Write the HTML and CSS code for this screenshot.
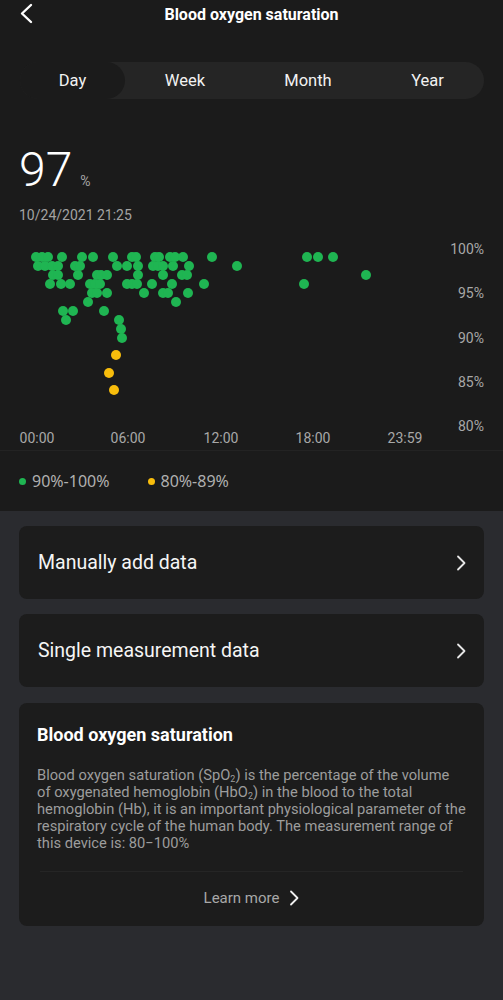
FILE: index.html
```html
<!DOCTYPE html>
<html>
<head>
<meta charset="utf-8">
<link rel="stylesheet" href="styles.css">
</head>
<body>
<div class="top">
  <header class="header">
    <svg class="back" width="14" height="22" viewBox="0 0 14 22"><path d="M11 2 L2 10.5 L11 19" fill="none" stroke="#fff" stroke-width="2.4" stroke-linecap="round" stroke-linejoin="round"/></svg>
    <h1 class="title">Blood oxygen saturation</h1>
  </header>

  <nav class="tabs">
    <span class="tab active">Day</span>
    <span class="tab">Week</span>
    <span class="tab">Month</span>
    <span class="tab">Year</span>
  </nav>

  <section class="reading">
    <div class="value"><span class="num">97</span><span class="unit">%</span></div>
    <div class="date">10/24/2021 21:25</div>
  </section>

  <div class="chart">
    <svg width="503" height="210" viewBox="0 0 503 210">
      <g class="ylab">
        <text x="484" y="8">100%</text>
        <text x="484" y="52">95%</text>
        <text x="484" y="97">90%</text>
        <text x="484" y="141">85%</text>
        <text x="484" y="185">80%</text>
      </g>
      <g class="xlab">
        <text x="37" y="197">00:00</text>
        <text x="128" y="197">06:00</text>
        <text x="221" y="197">12:00</text>
        <text x="313" y="197">18:00</text>
        <text x="405" y="197">23:59</text>
      </g>
      <g class="g-dots">
        <circle cx="36" cy="16" r="5"/><circle cx="42" cy="16" r="5"/><circle cx="48" cy="16" r="5"/>
        <circle cx="62" cy="16" r="5"/><circle cx="82" cy="16" r="5"/><circle cx="93" cy="16" r="5"/>
        <circle cx="113" cy="16" r="5"/><circle cx="132" cy="16" r="5"/><circle cx="136" cy="16" r="5"/>
        <circle cx="155" cy="16" r="5"/><circle cx="159" cy="16" r="5"/><circle cx="170" cy="16" r="5"/>
        <circle cx="175" cy="16" r="5"/><circle cx="183" cy="16" r="5"/><circle cx="212" cy="16" r="5"/>
        <circle cx="307" cy="16" r="5"/><circle cx="318" cy="16" r="5"/><circle cx="333" cy="16" r="5"/>

        <circle cx="38" cy="25" r="5"/><circle cx="45" cy="25" r="5"/><circle cx="52" cy="25" r="5"/>
        <circle cx="58" cy="25" r="5"/><circle cx="75" cy="25" r="5"/><circle cx="80" cy="25" r="5"/>
        <circle cx="117" cy="25" r="5"/><circle cx="127" cy="25" r="5"/><circle cx="138" cy="25" r="5"/>
        <circle cx="153" cy="25" r="5"/><circle cx="158" cy="25" r="5"/><circle cx="163" cy="25" r="5"/>
        <circle cx="173" cy="25" r="5"/><circle cx="189" cy="25" r="5"/><circle cx="237" cy="25" r="5"/>

        <circle cx="53" cy="34" r="5"/><circle cx="58" cy="34" r="5"/><circle cx="78" cy="34" r="5"/>
        <circle cx="97" cy="34" r="5"/><circle cx="101" cy="34" r="5"/><circle cx="107" cy="34" r="5"/>
        <circle cx="138" cy="34" r="5"/><circle cx="163" cy="34" r="5"/><circle cx="182" cy="34" r="5"/>
        <circle cx="187" cy="34" r="5"/><circle cx="366" cy="34" r="5"/>

        <circle cx="50" cy="43" r="5"/><circle cx="61" cy="43" r="5"/><circle cx="70" cy="43" r="5"/>
        <circle cx="90" cy="43" r="5"/><circle cx="95" cy="43" r="5"/><circle cx="100" cy="43" r="5"/>
        <circle cx="127" cy="43" r="5"/><circle cx="132" cy="43" r="5"/><circle cx="137" cy="43" r="5"/>
        <circle cx="152" cy="43" r="5"/><circle cx="172" cy="43" r="5"/><circle cx="204" cy="43" r="5"/>
        <circle cx="304" cy="43" r="5"/>

        <circle cx="92" cy="52" r="5"/><circle cx="97" cy="52" r="5"/><circle cx="107" cy="52" r="5"/>
        <circle cx="144" cy="52" r="5"/><circle cx="163" cy="52" r="5"/><circle cx="168" cy="52" r="5"/>
        <circle cx="188" cy="52" r="5"/>

        <circle cx="88" cy="61" r="5"/><circle cx="176" cy="61" r="5"/>

        <circle cx="63" cy="70" r="5"/><circle cx="73" cy="70" r="5"/><circle cx="104" cy="70" r="5"/>
        <circle cx="66" cy="79" r="5"/><circle cx="119" cy="79" r="5"/>
        <circle cx="121" cy="88" r="5"/>
        <circle cx="122" cy="97" r="5"/>
      </g>
      <g class="y-dots">
        <circle cx="116" cy="114" r="5"/>
        <circle cx="109" cy="132" r="5"/>
        <circle cx="114" cy="149" r="5"/>
      </g>
    </svg>
  </div>

  <div class="legend">
    <span class="key"><i class="dot green"></i>90%-100%</span>
    <span class="key"><i class="dot yellow"></i>80%-89%</span>
  </div>
</div>

<main class="bottom">
  <a class="row-card">
    <span>Manually add data</span>
    <svg width="10" height="16" viewBox="0 0 10 16"><path d="M2 1.5 L8.5 8 L2 14.5" fill="none" stroke="#e6e6e6" stroke-width="1.8" stroke-linecap="round" stroke-linejoin="round"/></svg>
  </a>
  <a class="row-card">
    <span>Single measurement data</span>
    <svg width="10" height="16" viewBox="0 0 10 16"><path d="M2 1.5 L8.5 8 L2 14.5" fill="none" stroke="#e6e6e6" stroke-width="1.8" stroke-linecap="round" stroke-linejoin="round"/></svg>
  </a>
  <section class="info">
    <h2 class="info-title">Blood oxygen saturation</h2>
    <p class="info-text">Blood oxygen saturation (SpO<sub>2</sub>) is the percentage of the volume of oxygenated hemoglobin (HbO<sub>2</sub>) in the blood to the total hemoglobin (Hb), it is an important physiological parameter of the respiratory cycle of the human body. The measurement range of this device is: 80−100%</p>
    <div class="learn">
      <span>Learn more</span>
      <svg width="10" height="16" viewBox="0 0 10 16"><path d="M2 1.5 L8.5 8 L2 14.5" fill="none" stroke="#f0f0f0" stroke-width="1.8" stroke-linecap="round" stroke-linejoin="round"/></svg>
    </div>
  </section>
</main>
</body>
</html>
```
FILE: styles.css
```css
* { box-sizing: border-box; }
html, body { margin: 0; padding: 0; }
body {
  width: 503px;
  min-height: 1000px;
  background: #2a2b2f;
  font-family: Roboto, "Liberation Sans", sans-serif;
  color: #fff;
}
.top { background: #1b1b1b; }

.header {
  height: 30px;
  display: flex;
  align-items: center;
  justify-content: center;
  position: relative;
}
.back { position: absolute; left: 20px; top: 3px; }
.title {
  margin: 0;
  font-size: 16px;
  font-weight: 700;
  line-height: 30px;
  color: #fff;
}

.tabs {
  margin: 32px 19px 0 20px;
  height: 37px;
  border-radius: 19px;
  background: #252525;
  display: grid;
  grid-template-columns: 105px 120px 126px 1fr;
  align-items: center;
}
.tab {
  height: 37px;
  line-height: 38px;
  text-align: center;
  font-size: 16.5px;
  color: #f2f2f2;
}
.tab.active { background: #1b1b1b; border-radius: 19px; }

.reading { padding: 47px 19px 0; }
.value { display: flex; align-items: baseline; height: 48px; line-height: 48px; }
.num { font-size: 48px; font-weight: 300; color: #fff; }
.unit { font-size: 14px; color: #a5a5a5; margin-left: 8px; }
.date { margin-top: 12px; font-size: 14px; line-height: 18px; color: #a3a3a3; }

.chart {
  margin-top: 17px;
  height: 210px;
  border-bottom: 1px solid #232323;
}
.chart svg { display: block; }
.ylab text { font-size: 14px; fill: #a8a8a8; text-anchor: end; dominant-baseline: central; font-family: Roboto, sans-serif; }
.xlab text { font-size: 14px; fill: #a8a8a8; text-anchor: middle; dominant-baseline: central; font-family: Roboto, sans-serif; }
.g-dots circle { fill: #1fb552; }
.y-dots circle { fill: #f8bd0c; }

.legend {
  height: 60px;
  display: flex;
  align-items: center;
  gap: 38px;
  padding: 0 0 0 19px;
}
.key {
  display: flex;
  align-items: center;
  font-family: "Noto Sans", sans-serif;
  font-size: 16px;
  color: #b0b0b0;
}
.dot { width: 7px; height: 7px; border-radius: 50%; margin-right: 6px; display: inline-block; }
.dot.green { background: #1fb552; }
.dot.yellow { background: #f8bd0c; }

.bottom {
  padding: 15px 19px 0 19px;
  display: flex;
  flex-direction: column;
  gap: 15px;
}
.row-card {
  height: 73px;
  border-radius: 8px;
  background: #1c1c1c;
  display: flex;
  align-items: center;
  justify-content: space-between;
  padding: 0 18px 0 19px;
  font-size: 19.5px;
  color: #f5f5f5;
}
.info {
  margin-top: 1px;
  background: #1c1c1c;
  border-radius: 8px;
  padding: 20px 18px 0 18px;
  height: 223px;
}
.info-title { margin: 0; font-size: 18px; font-weight: 700; line-height: 24px; color: #fff; }
.info-text {
  margin: 20px 0 0;
  font-size: 14.7px;
  line-height: 17px;
  color: #9d9d9d;
}
.info-text sub { font-size: 9px; vertical-align: -2px; line-height: 0; }
.learn {
  margin: 19px 3px 0;
  border-top: 1px solid #252525;
  height: 53px;
  display: flex;
  align-items: center;
  justify-content: center;
  gap: 10px;
  font-size: 15px;
  color: #a8a8a8;
}
```
